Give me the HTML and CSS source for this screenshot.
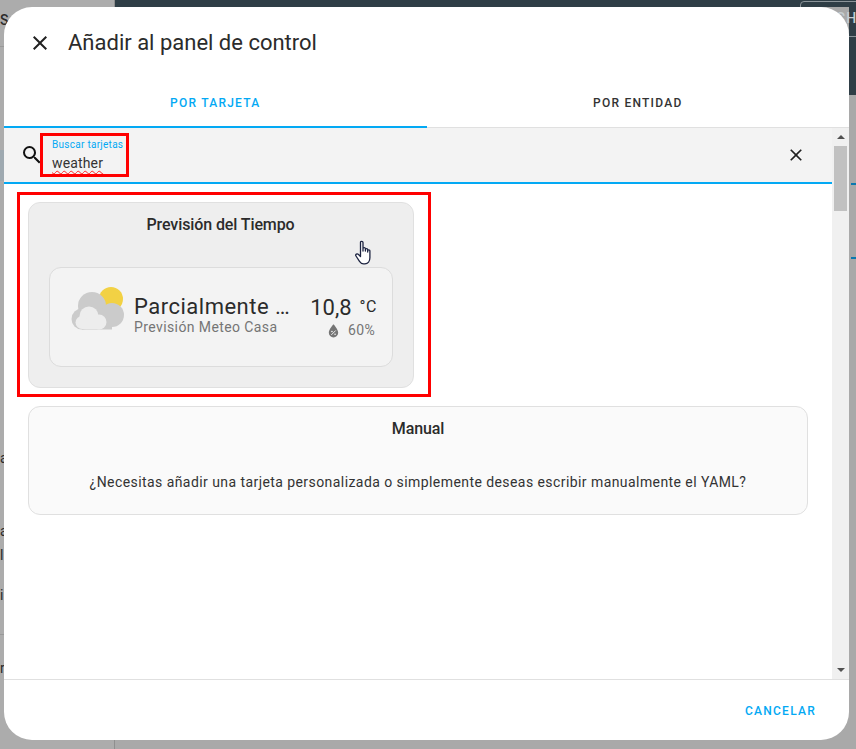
FILE: index.html
```html
<!DOCTYPE html>
<html lang="es">
<head>
<meta charset="utf-8">
<title>Añadir al panel de control</title>
<link rel="stylesheet" href="styles.css">
</head>
<body>
<div class="backdrop">
  <div class="bg-side"></div>
  <div class="bg-patch"></div>
  <div class="bg-top"></div>
  <div class="bg-right"></div>
  <div class="bg-action">CH</div>
  <span class="bg-char c1">S</span>
  <span class="bg-char c2">a</span>
  <span class="bg-char c3">a</span>
  <span class="bg-char c4">l</span>
  <span class="bg-char c5">i</span>
  <span class="bg-char c6">r</span>
  <div class="bg-rule r1"></div>
  <div class="bg-rule r2"></div>
  <div class="bg-blue b1"></div>
  <div class="bg-blue b2"></div>
  <div class="bg-vline"></div>
</div>

<main class="dialog">
  <header class="dialog-head">
    <svg class="close-icon" viewBox="0 0 24 24" width="24" height="24"><path d="M19 6.41 17.59 5 12 10.59 6.41 5 5 6.41 10.59 12 5 17.59 6.41 19 12 13.41 17.59 19 19 17.59 13.41 12z"/></svg>
    <h1 class="dialog-title">Añadir al panel de control</h1>
  </header>
  <nav class="tabs">
    <div class="tab tab-active">POR TARJETA</div>
    <div class="tab">POR ENTIDAD</div>
  </nav>
  <div class="body-row">
    <div class="body-main">
      <div class="search">
        <svg class="search-icon" viewBox="0 0 24 24" width="24" height="24"><path d="M9.5 3A6.5 6.5 0 0 1 16 9.5c0 1.61-.59 3.09-1.56 4.23l.27.27h.79l5 5-1.5 1.5-5-5v-.79l-.27-.27A6.516 6.516 0 0 1 9.5 16 6.500 6.500 0 0 1 3 9.500 6.500 6.500 0 0 1 9.500 3m0 2C7 5 5 7 5 9.500S7 14 9.500 14 14 12 14 9.500 12 5 9.500 5z"/></svg>
        <div class="search-field">
          <div class="search-label">Buscar tarjetas</div>
          <div class="search-value">weather</div>
        </div>
        <svg class="clear-icon" viewBox="0 0 24 24" width="20" height="20"><path d="M19 6.41 17.59 5 12 10.59 6.41 5 5 6.41 10.59 12 5 17.59 6.41 19 12 13.41 17.59 19 19 17.59 13.41 12z"/></svg>
      </div>
      <div class="results">
        <section class="card card-weather">
          <h2 class="card-title">Previsión del Tiempo</h2>
          <div class="weather">
            <svg class="weather-icon" viewBox="0 0 54 44" width="54" height="44">
              <circle cx="40" cy="12" r="12" fill="#f2d144"/>
              <g fill="#cbcbcb">
                <circle cx="21" cy="19" r="14"/>
                <circle cx="41" cy="28" r="12"/>
                <circle cx="11" cy="32" r="10.500"/>
                <rect x="11" y="26" width="30" height="16.500"/>
              </g>
              <g fill="#ededed">
                <circle cx="18" cy="29" r="9.500"/>
                <circle cx="11" cy="35.500" r="6.500"/>
                <circle cx="28" cy="35" r="7.500"/>
                <rect x="11" y="32" width="17" height="10"/>
              </g>
            </svg>
            <div class="weather-text">
              <div class="weather-state">Parcialmente …</div>
              <div class="weather-name">Previsión Meteo Casa</div>
            </div>
            <div class="weather-values">
              <div class="weather-temp">10,8<span class="weather-unit">°C</span></div>
              <div class="weather-humidity">
                <svg viewBox="0 0 24 24" width="15" height="15"><path fill="#757575" d="M12 2S4.500 10 4.500 15.500a7.500 7.500 0 0 0 15 0C19.500 10 12 2 12 2z"/><path stroke="#f3f3f3" stroke-width="1.500" fill="none" d="M8.500 19l7-7"/><circle cx="9.500" cy="13.500" r="1.300" fill="#f3f3f3"/><circle cx="14.500" cy="18" r="1.300" fill="#f3f3f3"/></svg>
                <span>60%</span>
              </div>
            </div>
          </div>
        </section>
        <section class="card card-manual">
          <h2 class="card-title">Manual</h2>
          <p class="manual-text">¿Necesitas añadir una tarjeta personalizada o simplemente deseas escribir manualmente el YAML?</p>
        </section>
      </div>
    </div>
    <div class="scrollbar">
      <span class="arrow arrow-up"></span>
      <div class="thumb"></div>
      <span class="arrow arrow-down"></span>
    </div>
  </div>
  <footer class="dialog-foot">
    <span class="cancel">CANCELAR</span>
  </footer>
</main>

<div class="mark mark-search"></div>
<div class="mark mark-card"></div>
<svg class="hand" viewBox="0 0 20 26" width="20" height="26">
  <path fill="#fff" stroke="#1c2340" stroke-width="1.300" stroke-linejoin="round" d="M5.500 2.500c0-1.600 2.500-1.600 2.500 0v8.500V8.500c0-1.300 2.400-1.300 2.400 0V11 9.500c0-1.300 2.300-1.300 2.300 0V12 10.800c0-1.200 2.200-1.200 2.200 0v7c0 3.500-2 6-5 6H8.500c-2 0-3-1-4-2.500L1 16c-1-1.500 1-3 2.500-1.500l2 2z"/>
</svg>
</body>
</html>
```

FILE: styles.css
```css
* { box-sizing: border-box; }
html, body { margin: 0; height: 100%; }
body {
  position: relative;
  width: 856px;
  height: 749px;
  overflow: hidden;
  background: #a9a9a9;
  font-family: Roboto, "Liberation Sans", sans-serif;
  color: #212121;
}

/* dimmed page behind the dialog */
.backdrop { position: absolute; inset: 0; overflow: hidden; }
.bg-side { position: absolute; left: 0; top: 0; width: 115px; height: 749px; background: #acacac; }
.bg-patch { position: absolute; left: 0; top: 150px; width: 115px; height: 31px; background: #9ea9b0; }
.bg-top { position: absolute; left: 115px; top: 0; right: 0; height: 7px; background: #2f3e46; }
.bg-right { position: absolute; left: 849px; top: 0; right: 0; height: 95px; background: #2f3e46; }
.bg-action {
  position: absolute; left: 800px; top: 1px; width: 80px; height: 36px;
  border: 1px solid #8b9499; border-radius: 4px;
  padding: 8px 0 0 35px; font-size: 14px; font-weight: 500; color: #c5cdd1; letter-spacing: 1px;
}
.bg-char { position: absolute; left: 0; font-size: 14px; color: #2a2a2a; }
.c1 { top: 12px; font-weight: 500; }
.c2 { top: 450px; }
.c3 { top: 523px; }
.c4 { top: 547px; }
.c5 { top: 587px; }
.c6 { top: 660px; }
.bg-rule { position: absolute; left: 0; width: 115px; height: 1px; background: #999; }
.r1 { top: 46px; }
.r2 { top: 634px; }
.bg-blue { position: absolute; left: 851px; width: 5px; height: 2px; background: #0a78b0; }
.b1 { top: 183px; }
.b2 { top: 257px; }
.bg-vline { position: absolute; left: 114px; top: 0; bottom: 0; width: 1px; background: #8f8f8f; }

/* dialog */
.dialog {
  position: absolute; left: 4px; top: 7px;
  width: 845px; height: 733px;
  background: #fff; border-radius: 28px;
  display: flex; flex-direction: column; overflow: hidden;
}
.dialog-head { height: 73px; display: flex; align-items: center; padding: 0 0 2px 24px; gap: 16px; flex: none; }
.close-icon { fill: #212121; flex: none; }
.dialog-title { margin: 0; font-size: 22px; font-weight: 400; color: #2b2b2b; }

.tabs { display: flex; height: 48px; flex: none; border-bottom: 1px solid #e0e0e0; }
.tab {
  flex: 1; display: flex; align-items: center; justify-content: center;
  font-size: 12px; font-weight: 500; letter-spacing: 1.250px; color: #333;
  padding-bottom: 1px;
}
.tab-active { color: #03a9f4; border-bottom: 2px solid #03a9f4; margin-bottom: -1px; padding-bottom: 0; }

.body-row { flex: 1; display: flex; min-height: 0; }
.body-main { flex: 1; min-width: 0; display: flex; flex-direction: column; }

.search {
  height: 56px; flex: none; display: flex; align-items: center;
  background: #f3f3f3; border-bottom: 2px solid #03a9f4;
  padding: 0 26px 0 16px;
}
.search-icon { fill: #111; flex: none; }
.search-field { flex: 1; padding-left: 8px; padding-top: 1px; }
.search-label { font-size: 10px; line-height: 12px; color: #03a9f4; letter-spacing: 0.280px; }
.search-value {
  font-size: 14px; line-height: 18px; margin-top: 3px; color: #333; letter-spacing: 0.150px;
  text-decoration: underline wavy #f22; text-decoration-thickness: 1px; text-underline-offset: 2px;
}
.clear-icon { fill: #212121; flex: none; }

.results { padding: 18px 24px 0; display: flex; flex-direction: column; gap: 18px; }
.card { border: 1px solid #e0e0e0; border-radius: 12px; }
.card-title { margin: 0; font-size: 16px; font-weight: 500; line-height: 20px; text-align: center; color: #2b2b2b; letter-spacing: -0.100px; }
.card-weather { width: 386px; height: 186px; background: #eee; padding: 12px 21px 0 20px; }
.card-manual { height: 109px; background: #fafafa; padding: 12px 20px 0; }
.manual-text { margin: 33px 0 0; font-size: 14px; line-height: 20px; text-align: center; letter-spacing: 0.430px; color: #333; }

.weather {
  margin-top: 32px; height: 100px; margin-right: -1px;
  background: #f3f3f3; border: 1px solid #dcdcdc; border-radius: 12px;
  display: flex; align-items: flex-start; padding: 19px 16px 0 21px;
}
.weather-icon { flex: none; }
.weather-text { flex: 1; min-width: 0; padding: 7px 0 0 9px; }
.weather-state { font-size: 22px; line-height: 26px; letter-spacing: 0.500px; color: #2b2b2b; white-space: nowrap; }
.weather-name { font-size: 14px; line-height: 14px; letter-spacing: 0.400px; color: #757575; }
.weather-values { flex: none; text-align: right; padding-top: 7px; }
.weather-temp { font-size: 22px; line-height: 26px; color: #2b2b2b; }
.weather-unit { font-size: 16px; margin-left: 7px; vertical-align: 3px; letter-spacing: 0.500px; position: relative; left: 1px; }
.weather-humidity { display: flex; align-items: center; justify-content: flex-end; gap: 7px; font-size: 14px; color: #757575; letter-spacing: 0.300px; padding-right: 1px; height: 18px; }

.scrollbar { width: 17px; flex: none; background: #f0f0f0; display: flex; flex-direction: column; align-items: center; position: relative; }
.thumb { position: absolute; left: 2px; top: 18px; width: 13px; height: 65px; background: #c1c1c1; }
.arrow { position: absolute; left: 5px; width: 0; height: 0; border-left: 4px solid transparent; border-right: 4px solid transparent; }
.arrow-up { top: 7px; border-bottom: 4px solid #505050; }
.arrow-down { bottom: 7px; border-top: 4px solid #505050; }

.dialog-foot { height: 61px; flex: none; border-top: 1px solid #e0e0e0; display: flex; align-items: center; justify-content: flex-end; padding: 2px 33px 0 0; }
.cancel { font-size: 12px; font-weight: 500; letter-spacing: 1.250px; color: #03a9f4; }

/* red annotation boxes and pointer, drawn over the screenshot */
.mark { position: absolute; border: 3px solid #f00; }
.mark-search { left: 40px; top: 133px; width: 89px; height: 44px; }
.mark-card { left: 17px; top: 192px; width: 414px; height: 205px; }
.hand { position: absolute; left: 355px; top: 240px; }
```
